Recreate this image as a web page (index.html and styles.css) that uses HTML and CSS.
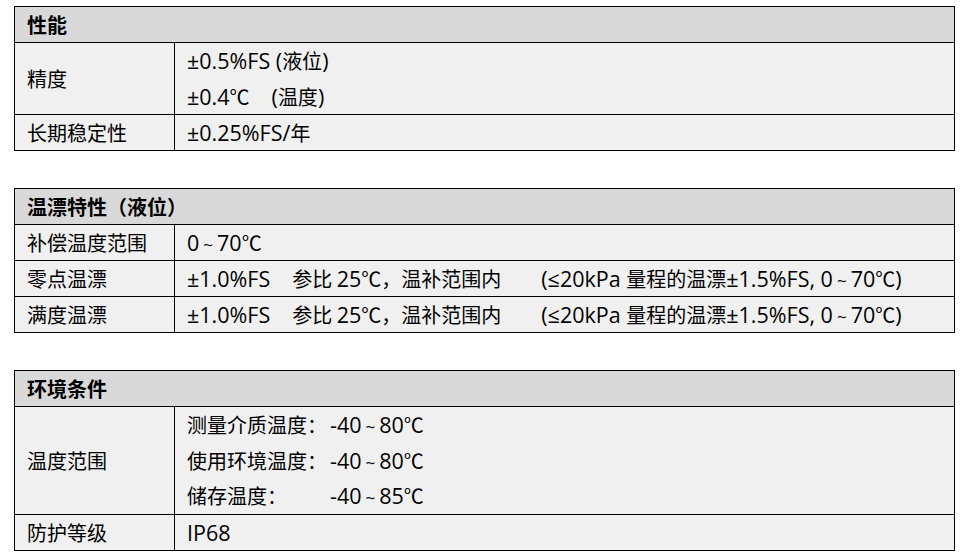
FILE: index.html
```html
<!DOCTYPE html>
<html lang="zh-CN">
<head>
    <meta charset="UTF-8">
    <title>技术参数</title>
    <link rel="stylesheet" href="styles.css">
</head>
<body>
    <!-- 性能 -->
    <table class="spec">
        <tr class="head"><th colspan="2">性能</th></tr>
        <tr>
            <td class="name">精度</td>
            <td>
                <div class="line"><span class="en">±0.5%FS (</span>液位<span class="en">)</span></div>
                <div class="line"><span class="en">±0.4</span>℃<span class="gap"></span><span class="en">(</span>温度<span class="en">)</span></div>
            </td>
        </tr>
        <tr>
            <td class="name">长期稳定性</td>
            <td><span class="en">±0.25%FS/</span>年</td>
        </tr>
    </table>

    <!-- 温漂特性 -->
    <table class="spec">
        <tr class="head"><th colspan="2">温漂特性（液位）</th></tr>
        <tr>
            <td class="name">补偿温度范围</td>
            <td><span class="en">0<span class="tilde">~</span>70</span>℃</td>
        </tr>
        <tr>
            <td class="name">零点温漂</td>
            <td><span class="en">±1.0%FS</span><span class="gap"></span>参比 <span class="en">25</span>℃，温补范围内<span class="gap wide"></span><span class="en">(≤20kPa </span>量程的温漂<span class="en">±1.5%FS, 0<span class="tilde">~</span>70</span>℃<span class="en">)</span></td>
        </tr>
        <tr>
            <td class="name">满度温漂</td>
            <td><span class="en">±1.0%FS</span><span class="gap"></span>参比 <span class="en">25</span>℃，温补范围内<span class="gap wide"></span><span class="en">(≤20kPa </span>量程的温漂<span class="en">±1.5%FS, 0<span class="tilde">~</span>70</span>℃<span class="en">)</span></td>
        </tr>
    </table>

    <!-- 环境条件 -->
    <table class="spec">
        <tr class="head"><th colspan="2">环境条件</th></tr>
        <tr>
            <td class="name">温度范围</td>
            <td>
                <div class="line"><span class="label">测量介质温度：</span><span class="en">-40<span class="tilde">~</span>80</span>℃</div>
                <div class="line"><span class="label">使用环境温度：</span><span class="en">-40<span class="tilde">~</span>80</span>℃</div>
                <div class="line"><span class="label">储存温度：</span><span class="en">-40<span class="tilde">~</span>85</span>℃</div>
            </td>
        </tr>
        <tr>
            <td class="name">防护等级</td>
            <td><span class="en">IP68</span></td>
        </tr>
    </table>
</body>
</html>
```

FILE: styles.css
```css
body {
    margin: 6px 0 0 14px;
    background: #fff;
    color: #000;
    font-family: "Noto Sans CJK SC", sans-serif;
    font-size: 20px;
}
.spec {
    width: 941px;
    border-collapse: collapse;
    margin-bottom: 37px;
}
.spec:last-child {
    margin-bottom: 0;
}
.spec th,
.spec td {
    border: 1px solid #000;
    padding: 0 12px;
    height: 35px;
    line-height: 35px;
    text-align: left;
    background: #f0f0f0;
    font-weight: normal;
}
.spec .head th {
    background: #d9d9d9;
    font-weight: bold;
}
.spec .name {
    width: 135px;
}
.line {
    line-height: 35.5px;
}
.en {
    font-family: "Open Sans", sans-serif;
    font-size: 21.5px;
    line-height: 1;
}
.gap {
    display: inline-block;
    width: 22px;
}
.gap.wide {
    width: 40px;
}
.tilde {
    font-size: 17px;
    margin: 0 4px;
}
.label {
    display: inline-block;
    width: 143px;
}
```
